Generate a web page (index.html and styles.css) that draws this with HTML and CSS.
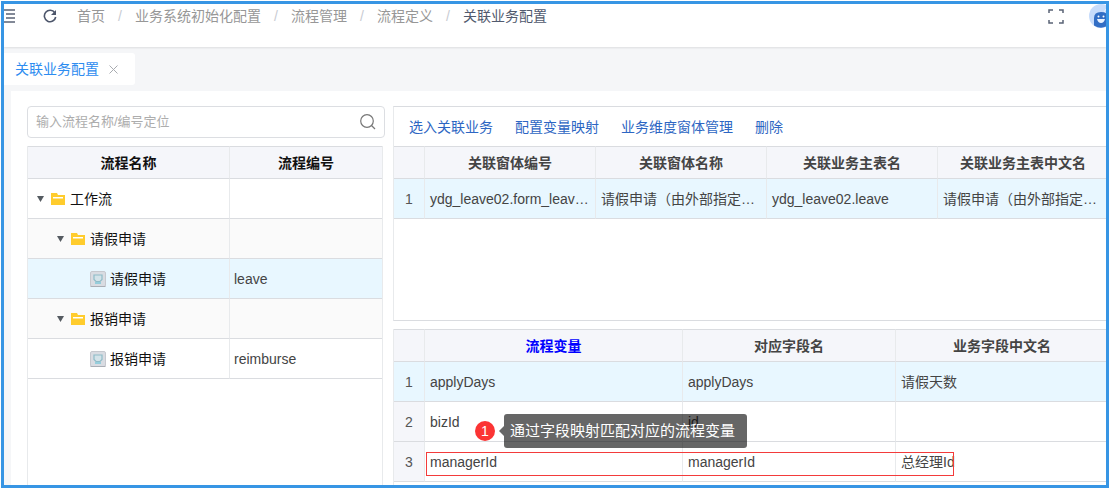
FILE: index.html
```html
<!DOCTYPE html>
<html lang="zh-CN">
<head>
<meta charset="utf-8">
<title>关联业务配置</title>
<link rel="stylesheet" href="styles.css">
</head>
<body>
<svg class="sprite" aria-hidden="true">
  <symbol id="folder" viewBox="0 0 14 12"><path d="M0 0h6l1 2h7v10H0z" fill="#ffcc2d"/><path d="M2 4h10v1.500H2z" fill="#fff"/></symbol>
  <symbol id="form" viewBox="0 0 16 16"><rect x=".5" y=".5" width="15" height="15" rx="1.500" fill="#d9dce2" stroke="#c6c8ce"/><path d="M.5 15.500h15" stroke="#aaaeb5"/><path d="M4 4h8v4.500l-2 2H6l-2-2z" fill="#d3e3e9" stroke="#8fbcc8" stroke-width="1.200"/><path d="M5 12h6" stroke="#69c4d8" stroke-width="1.200"/></symbol>
  <symbol id="caret" viewBox="0 0 7 6"><path d="M0 0h7L3.500 6z" fill="#555b61"/></symbol>
</svg>
<div class="frame">
  <header class="topbar">
    <button class="icon-btn menu" aria-label="菜单"><svg width="11" height="14" viewBox="0 0 11 14"><path d="M0 1h11M2 5h9M2 9h9M0 13h11" stroke="#5a6376" stroke-width="1.400"/></svg></button>
    <button class="icon-btn refresh" aria-label="刷新"><svg width="14" height="14" viewBox="0 0 14 14"><path d="M11.800 3.800A5.700 5.700 0 1 0 12.700 8" fill="none" stroke="#4d566b" stroke-width="1.600"/><path d="M13 1v5H8z" fill="#4d566b"/></svg></button>
    <nav class="crumbs">
      <a href="#">首页</a><i>/</i><a href="#">业务系统初始化配置</a><i>/</i><a href="#">流程管理</a><i>/</i><a href="#">流程定义</a><i>/</i><span>关联业务配置</span>
    </nav>
    <button class="icon-btn full" aria-label="全屏"><svg width="16" height="15" viewBox="0 0 16 15"><path d="M1 4V1h4M11 1h4v3M1 11v3h4M11 14h4v-3" fill="none" stroke="#5a6376" stroke-width="1.500"/></svg></button>
    <svg class="avatar" width="24" height="24" viewBox="0 0 24 24"><circle cx="12" cy="12" r="12" fill="#c7dcfb"/><path d="M5 21.500V14q0-6 7-6t7 6v7.500q-7 4.500-14 0z" fill="#326ec5"/><path d="M15 8l2-3" stroke="#e8f2ff"/><circle cx="9.500" cy="12.500" r="1" fill="#fff"/><circle cx="14.500" cy="12.500" r="1" fill="#fff"/><path d="M8 15h8q-1 4-4 4t-4-4z" fill="#e8f2ff"/></svg>
  </header>
  <div class="tabs">
    <div class="tab"><a href="#">关联业务配置</a><button class="icon-btn" aria-label="关闭"><svg width="9" height="9" viewBox="0 0 9 9"><path d="M.5.5l8 8M8.500.5l-8 8" stroke="#a8abb0"/></svg></button></div>
  </div>
  <main class="page">
    <section class="left">
      <div class="search">
        <input type="text" placeholder="输入流程名称/编号定位" aria-label="输入流程名称/编号定位">
        <button class="icon-btn" aria-label="搜索"><svg width="16" height="16" viewBox="0 0 16 16"><circle cx="7" cy="7" r="6.300" fill="none" stroke="#777" stroke-width="1.200"/><path d="M11.500 11.500l3.500 3.500" stroke="#777" stroke-width="1.200"/></svg></button>
      </div>
      <div class="tree">
        <table>
          <colgroup><col class="c-name"><col></colgroup>
          <thead><tr><th>流程名称</th><th>流程编号</th></tr></thead>
          <tbody>
            <tr><td><div class="node"><svg class="caret"><use href="#caret"/></svg><svg class="folder"><use href="#folder"/></svg>工作流</div></td><td></td></tr>
            <tr class="alt"><td><div class="node l2"><svg class="caret"><use href="#caret"/></svg><svg class="folder"><use href="#folder"/></svg>请假申请</div></td><td></td></tr>
            <tr class="on"><td><div class="node l3"><svg class="form"><use href="#form"/></svg>请假申请</div></td><td>leave</td></tr>
            <tr class="alt"><td><div class="node l2"><svg class="caret"><use href="#caret"/></svg><svg class="folder"><use href="#folder"/></svg>报销申请</div></td><td></td></tr>
            <tr><td><div class="node l3"><svg class="form"><use href="#form"/></svg>报销申请</div></td><td>reimburse</td></tr>
          </tbody>
        </table>
      </div>
    </section>
    <section class="right">
      <div class="panel forms">
        <div class="toolbar"><button>选入关联业务</button><button>配置变量映射</button><button>业务维度窗体管理</button><button>删除</button></div>
        <table>
          <colgroup><col class="c-no"><col><col><col><col></colgroup>
          <thead><tr><th></th><th>关联窗体编号</th><th>关联窗体名称</th><th>关联业务主表名</th><th>关联业务主表中文名</th></tr></thead>
          <tbody><tr class="on"><td class="no">1</td><td>ydg_leave02.form_leave02</td><td>请假申请（由外部指定表单）</td><td>ydg_leave02.leave</td><td>请假申请（由外部指定表单）</td></tr></tbody>
        </table>
      </div>
      <div class="panel vars">
        <table>
          <colgroup><col class="c-no"><col class="c-var"><col><col></colgroup>
          <thead><tr><th></th><th class="key">流程变量</th><th>对应字段名</th><th>业务字段中文名</th></tr></thead>
          <tbody>
            <tr class="on"><td class="no">1</td><td>applyDays</td><td>applyDays</td><td>请假天数</td></tr>
            <tr><td class="no">2</td><td>bizId</td><td>id</td><td></td></tr>
            <tr><td class="no">3</td><td>managerId</td><td>managerId</td><td>总经理Id</td></tr>
          </tbody>
        </table>
        <div class="mark"></div>
        <div class="note"><span class="badge">1</span><span class="tip">通过字段映射匹配对应的流程变量</span></div>
      </div>
    </section>
  </main>
</div>
</body>
</html>
```
FILE: styles.css
```css
* { box-sizing: border-box; }
body { margin: 0; padding: 1px 0 0 1px; height: 100vh; overflow: hidden; background: #fff; color: #444; font: 14px/20px "Liberation Sans", "Noto Sans CJK SC", sans-serif; }
a { color: inherit; text-decoration: none; }
button { font: inherit; border: 0; padding: 0; background: none; cursor: pointer; }
.sprite { position: absolute; width: 0; height: 0; }
.frame { height: 100%; display: flex; flex-direction: column; overflow: hidden; border: 3px solid #3795e4; background: #f5f6f8; }
.icon-btn { display: flex; align-items: center; flex: none; }

.topbar { display: flex; align-items: center; flex: none; height: 43px; padding-bottom: 19px; background: #fff; box-shadow: 0 1px 2px rgba(0, 0, 0, .1); }
.refresh { margin-left: 28px; }
.crumbs { display: flex; flex: 1; margin-left: 20px; color: #979797; white-space: nowrap; }
.crumbs i { width: 30px; text-align: center; font-style: normal; color: #c9ccd3; }
.crumbs span { color: #515a6e; }
.full { margin-right: 25px; }
.avatar { flex: none; margin-right: -7px; }

.tabs { display: flex; flex: none; padding: 6px 0; }
.tab { display: flex; align-items: center; gap: 10px; height: 32px; padding: 0 17px 0 11px; background: #fff; border-radius: 0 3px 3px 0; color: #2d8cf0; }

.page { display: flex; flex: 1; min-height: 0; gap: 8px; margin: 0 -3px 0 7px; padding: 15px 0 0 16px; background: #fff; }
.left { display: flex; flex-direction: column; flex: none; width: 358px; }
.search { display: flex; align-items: center; flex: none; height: 32px; margin-bottom: 8px; padding: 0 8px; border: 1px solid #dcdee2; border-radius: 4px; }
.search input { flex: 1; min-width: 0; height: 28px; padding: 0 0 2px; border: 0; outline: 0; background: none; font: inherit; font-size: 13px; }
.search input::placeholder { color: #adadad; }
.tree { flex: 1; width: 356px; border: 1px solid #e8eaec; border-top: 0; border-bottom: 0; }

table { width: 100%; table-layout: fixed; border-collapse: separate; border-spacing: 0; }
th, td { overflow: hidden; padding: 0 5px; white-space: nowrap; text-overflow: ellipsis; border-right: 1px solid #e8eaec; border-bottom: 1px solid #dadce0; }
th { height: 33px; background: #f5f6fa; border-top: 1px solid #dadce0; text-align: center; }
td { height: 40px; text-align: left; }
.tree th, .node { color: #111; }
.tree tr > :last-child { border-right: 0; }
.tree td { padding-left: 4px; }
.alt td { background: #fafafa; }
.on td { background: #e8f7ff; }
.c-name { width: 202px; }
.c-no { width: 31px; }
.c-var { width: 258px; }
.node { display: flex; align-items: center; padding-left: 5px; }
.l2 { padding-left: 25px; }
.l3 { padding-left: 58px; }
.caret { width: 7px; height: 6px; margin-right: 7px; }
.folder { width: 14px; height: 12px; margin-right: 5px; }
.form { width: 16px; height: 16px; margin-right: 4px; }

.right { display: flex; flex-direction: column; flex: 1; min-width: 0; gap: 8px; }
.panel { border-left: 1px solid #e8eaec; }
.forms { flex: none; height: 215px; border-top: 1px solid #dadce0; border-bottom: 1px solid #dadce0; }
.toolbar { display: flex; gap: 22px; height: 39px; padding-left: 15px; align-items: center; color: #2d66c3; }
.toolbar button { color: inherit; }
.vars { position: relative; flex: 1; }
.panel .no { padding: 0; text-align: center; background: #f5f6fa; color: #555; }
.panel .on .no { background: #e8f7ff; }
.vars .key { color: #00f; }

.mark { position: absolute; left: 32px; top: 123px; width: 528px; height: 24px; border: 1px solid #f33b3b; }
.note { position: absolute; left: 81px; top: 85px; display: flex; align-items: center; gap: 9px; color: #fff; font-size: 15px; }
.badge { width: 20px; height: 20px; border-radius: 50%; background: #fb3434; text-align: center; font-size: 14px; }
.tip { position: relative; padding: 7px 12px 7px 6px; border-radius: 3px; background: rgba(0, 0, 0, .6); white-space: nowrap; }
.tip::before { content: ""; position: absolute; left: -5px; top: 12px; border: 5px solid transparent; border-left: 0; border-right-color: rgba(0, 0, 0, .6); }
```
